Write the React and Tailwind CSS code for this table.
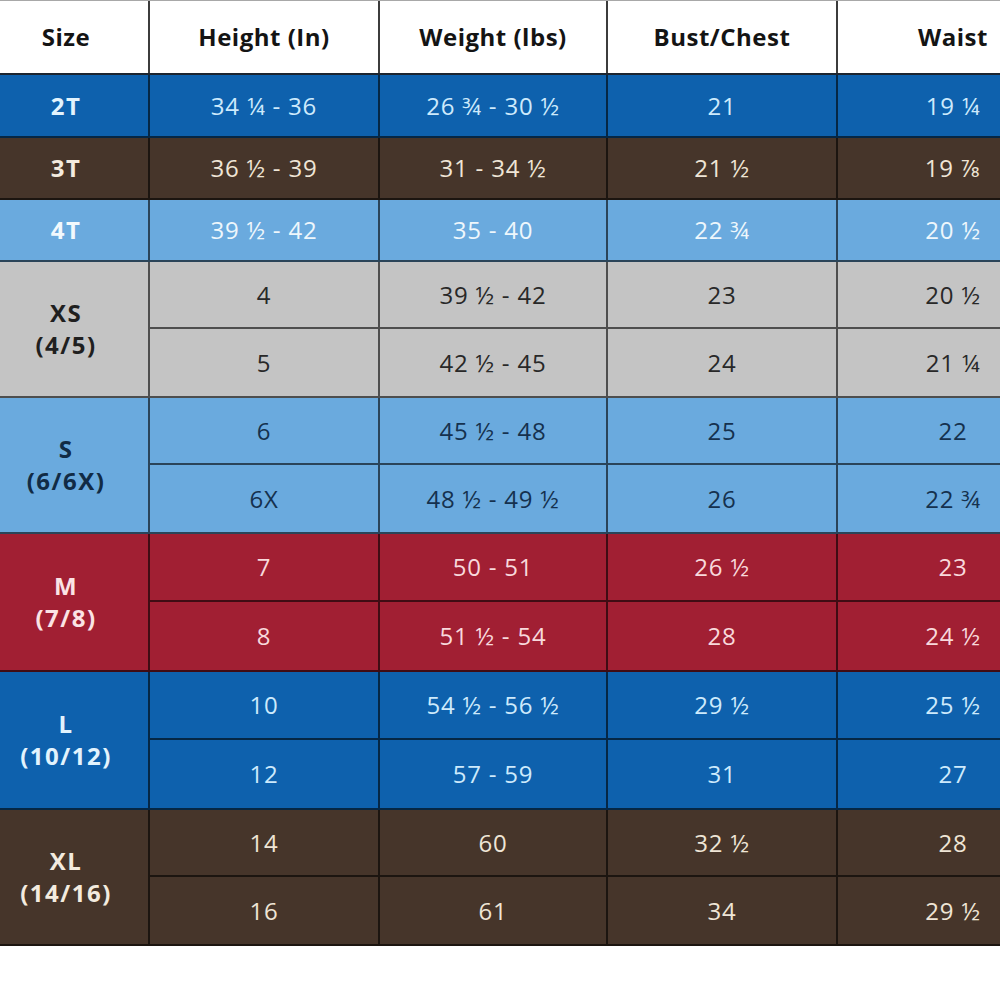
import React from "react";

const GRID = "grid grid-cols-[166px_230px_228px_230px_230px]";

const themes = {
  blue: { bg: "bg-[#0e61ad]", text: "text-[#cdeafc]", label: "text-[#e2f3fd]" },
  brown: { bg: "bg-[#46352a]", text: "text-[#efe5d6]", label: "text-[#f3ebdf]" },
  sky: { bg: "bg-[#6aaade]", text: "text-[#eef7fc]", label: "text-[#f2f9fd]" },
  skyDark: { bg: "bg-[#6aaade]", text: "text-[#15314e]", label: "text-[#112b45]" },
  grey: { bg: "bg-[#c4c4c4]", text: "text-[#282828]", label: "text-[#1f1f1f]" },
  red: { bg: "bg-[#a11f33]", text: "text-[#f8d9dc]", label: "text-[#fbe3e5]" },
};

const singles = [
  { size: "2T", t: "blue", h: "h-[63px]", vals: ["34 ¼ - 36", "26 ¾ - 30 ½", "21", "19 ¼"] },
  { size: "3T", t: "brown", h: "h-[62px]", vals: ["36 ½ - 39", "31 - 34 ½", "21 ½", "19 ⅞"] },
  { size: "4T", t: "sky", h: "h-[62px]", vals: ["39 ½ - 42", "35 - 40", "22 ¾", "20 ½"] },
];

const groups = [
  { size: "XS", sub: "(4/5)", t: "grey", h: "h-[136px]", rows: [["4", "39 ½ - 42", "23", "20 ½"], ["5", "42 ½ - 45", "24", "21 ¼"]] },
  { size: "S", sub: "(6/6X)", t: "skyDark", h: "h-[136px]", rows: [["6", "45 ½ - 48", "25", "22"], ["6X", "48 ½ - 49 ½", "26", "22 ¾"]] },
  { size: "M", sub: "(7/8)", t: "red", h: "h-[138px]", rows: [["7", "50 - 51", "26 ½", "23"], ["8", "51 ½ - 54", "28", "24 ½"]] },
  { size: "L", sub: "(10/12)", t: "blue", h: "h-[138px]", rows: [["10", "54 ½ - 56 ½", "29 ½", "25 ½"], ["12", "57 - 59", "31", "27"]] },
  { size: "XL", sub: "(14/16)", t: "brown", h: "h-[136px]", rows: [["14", "60", "32 ½", "28"], ["16", "61", "34", "29 ½"]] },
];

const font = { fontFamily: '"Open Sans", "Liberation Sans", sans-serif' };

export default function App() {
  const headers = ["Size", "Height (In)", "Weight (lbs)", "Bust/Chest", "Waist"];
  return (
    <div className="w-[1000px] h-[1000px] overflow-hidden bg-white" style={font}>
      <div className="ml-[-16px] w-[1084px]">
        {/* Header */}
        <div className={`${GRID} h-[75px] bg-white border-t border-[#a8a8a8] border-b-2 border-b-[#1c2530]`}>
          {headers.map((h, i) => (
            <div
              key={h}
              className={`flex items-center justify-center text-[24px] font-bold text-[#141414] tracking-[0.5px] ${
                i < 4 ? "border-r-2 border-[#3c3c3c]" : ""
              }`}
            >
              {h}
            </div>
          ))}
        </div>

        {/* Single rows */}
        {singles.map((r) => {
          const th = themes[r.t];
          return (
            <div key={r.size} className={`${GRID} ${r.h} ${th.bg} border-b-2 border-black/60`}>
              <div className={`flex items-center justify-center border-r-2 border-black/60 text-[24px] font-bold tracking-[1.5px] ${th.label}`}>
                {r.size}
              </div>
              {r.vals.map((v, i) => (
                <div
                  key={i}
                  className={`flex items-center justify-center text-[24px] tracking-[0.8px] ${th.text} ${i < 3 ? "border-r-2 border-black/60" : ""}`}
                >
                  {v}
                </div>
              ))}
            </div>
          );
        })}

        {/* Grouped rows */}
        {groups.map((g) => {
          const th = themes[g.t];
          return (
            <div key={g.size} className={`${GRID} grid-rows-2 ${g.h} ${th.bg} border-b-2 border-black/60`}>
              <div
                className={`row-span-2 flex flex-col items-center justify-center border-r-2 border-black/60 text-[24px] font-bold leading-[32px] tracking-[1.5px] ${th.label}`}
              >
                <span>{g.size}</span>
                <span>{g.sub}</span>
              </div>
              {g.rows.map((row, ri) =>
                row.map((v, i) => (
                  <div
                    key={`${ri}-${i}`}
                    className={`flex items-center justify-center text-[24px] tracking-[0.8px] ${th.text} ${
                      i < 3 ? "border-r-2 border-black/60" : ""
                    } ${ri === 0 ? "border-b-2 border-b-black/60" : ""}`}
                  >
                    {v}
                  </div>
                ))
              )}
            </div>
          );
        })}
      </div>
    </div>
  );
}
